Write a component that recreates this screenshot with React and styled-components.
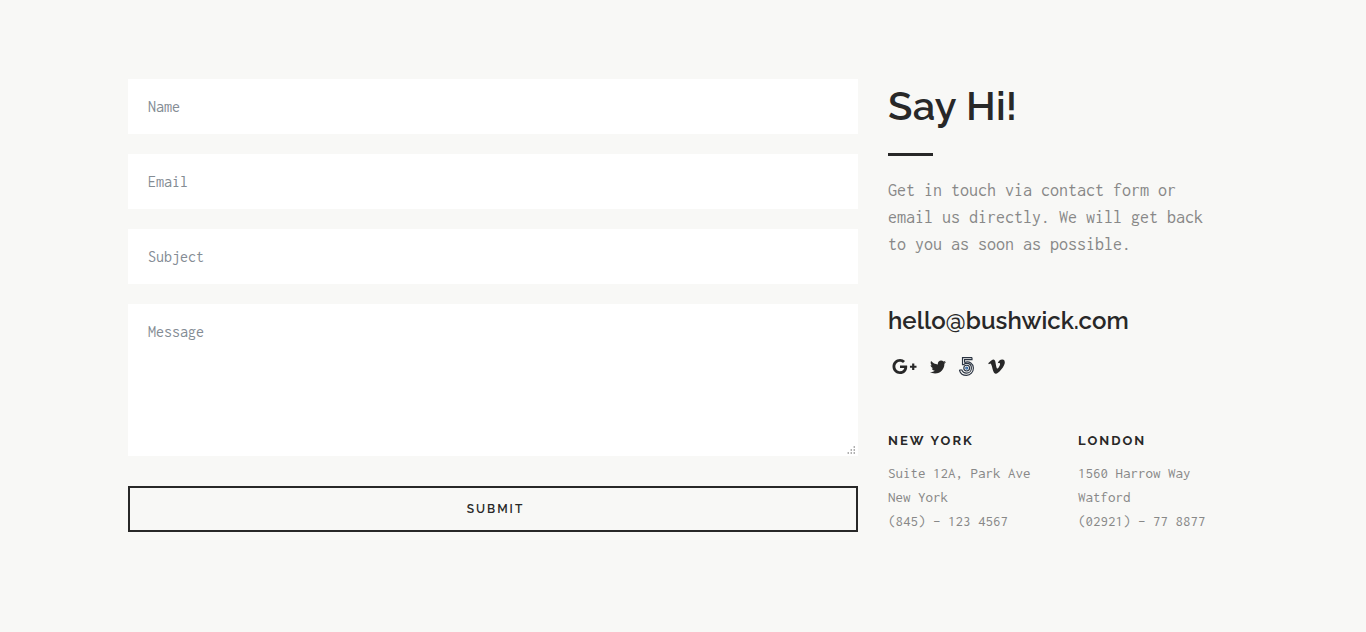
import React from 'react';
import styled, { createGlobalStyle } from 'styled-components';
import { FaTwitter, FaVimeoV, FaGooglePlusG } from 'react-icons/fa';

const GlobalStyle = createGlobalStyle`
  * {
    box-sizing: border-box;
  }
  body {
    margin: 0;
    background: #f8f8f6;
    color: #282828;
    font-family: Raleway, Lato, sans-serif;
  }
`;

const mono = `Inconsolata, 'Liberation Mono', monospace`;

const Section = styled.section`
  display: grid;
  grid-template-columns: 730px 350px;
  column-gap: 30px;
  width: 1110px;
  height: 632px;
  margin: 0 128px;
  padding-top: 79px;
  align-items: start;
`;

const Form = styled.form`
  display: flex;
  flex-direction: column;
  gap: 20px;
`;

const Input = styled.input`
  display: block;
  width: 100%;
  height: 55px;
  padding: 0 20px;
  border: 0;
  border-radius: 0;
  outline: none;
  background: #fff;
  font-family: ${mono};
  font-size: 16px;
  &::placeholder {
    color: #848c94;
    opacity: 1;
  }
`;

const MessageWrapper = styled.div`
  position: relative;
  svg {
    position: absolute;
    right: 3px;
    bottom: 2px;
    pointer-events: none;
  }
`;

const Message = styled(Input)`
  height: 152px;
  padding: 18px 20px;
  line-height: 20px;
  resize: none;
`;

const Submit = styled.button`
  height: 46px;
  margin-top: 10px;
  padding: 0 0 0 5px;
  border: 2px solid #282828;
  background: transparent;
  color: #282828;
  font-family: Raleway, Lato, sans-serif;
  font-size: 12px;
  font-weight: 600;
  letter-spacing: 2px;
`;

const Title = styled.h2`
  margin: 3px 0 0;
  font-size: 40px;
  font-weight: 600;
  line-height: 48px;
  letter-spacing: 0.25px;
  white-space: nowrap;
`;

const Divider = styled.div`
  width: 45px;
  height: 3px;
  margin: 23px 0 21px;
  background: #282828;
`;

const Intro = styled.p`
  margin: 0;
  color: #888;
  font-family: ${mono};
  font-size: 18px;
  line-height: 27px;
  white-space: nowrap;
`;

const Email = styled.h4`
  margin: 47px 0 0;
  font-size: 24px;
  font-weight: 600;
  line-height: 32px;
  letter-spacing: 0.02px;
  white-space: nowrap;
`;

const Social = styled.div`
  display: flex;
  align-items: center;
  height: 21px;
  margin: 19px 0 0 4px;
  svg {
    display: block;
  }
`;

const SocialLink = styled.a`
  width: ${({ $width }) => $width}px;
  color: #282828;
`;

const Offices = styled.div`
  display: grid;
  grid-template-columns: 190px 160px;
  margin-top: 54px;
`;

const City = styled.h6`
  margin: 0 0 10px;
  font-size: 13px;
  font-weight: 700;
  line-height: 20px;
  letter-spacing: 2px;
  word-spacing: 1px;
`;

const Address = styled.p`
  margin: 0;
  color: #888;
  font-family: ${mono};
  font-size: 15px;
  line-height: 24px;
  white-space: nowrap;
`;

const FiveHundred = () => (
  <svg width="16" height="19" viewBox="0 0 16 19" fill="none" stroke="#2b3442" strokeWidth="1.15">
    <path d="M13 .6H3.5v7h1.6M13 .6v2H5.5v3" />
    <path d="M5.5 5.5C10.5 3.6 14.4 6.9 14.4 11c0 4.2-3 7.3-6.9 7.3-3.6 0-6.2-2-7-5l2.2-.5" />
    <path d="M2.7 12.8c.8 2.1 2.4 3.3 4.8 3.3 2.9 0 4.9-2.2 4.9-5.1S10.4 6.4 7.7 6.4c-1.3 0-2.2.4-3 1.2" />
    <circle cx="7.7" cy="11.1" r="2.9" />
    <circle cx="7.7" cy="11.1" r="1" stroke="#2f66a3" />
  </svg>
);

const gripDots = [[6, 0], [3, 3], [6, 3], [0, 6], [3, 6], [6, 6]];

const Grip = () => (
  <svg width="8" height="8" viewBox="0 0 8 8">
    {gripDots.map(([x, y]) => (
      <g key={`${x}-${y}`}>
        <path d={`M${x} ${y}h2v2h-2z`} fill="#dcdcdc" />
        <path d={`M${x + 1} ${y}h1v2h-1z`} fill="#b0b0b0" />
      </g>
    ))}
  </svg>
);

const offices = [
  { city: 'NEW YORK', lines: ['Suite 12A, Park Ave', 'New York', '(845) – 123 4567'] },
  { city: 'LONDON', lines: ['1560 Harrow Way', 'Watford', '(02921) – 77 8877'] },
];

export default function App() {
  return (
    <>
      <GlobalStyle />
      <Section>
        <Form>
          <Input type="text" placeholder="Name" />
          <Input type="email" placeholder="Email" />
          <Input type="text" placeholder="Subject" />
          <MessageWrapper>
            <Message as="textarea" placeholder="Message" />
            <Grip />
          </MessageWrapper>
          <Submit type="button">SUBMIT</Submit>
        </Form>
        <div>
          <Title>Say Hi!</Title>
          <Divider />
          <Intro>
            Get in touch via contact form or
            <br />
            email us directly. We will get back
            <br />
            to you as soon as possible.
          </Intro>
          <Email>hello@bushwick.com</Email>
          <Social>
            <SocialLink $width={38}>
              <FaGooglePlusG size={25} />
            </SocialLink>
            <SocialLink $width={29}>
              <FaTwitter size={16} />
            </SocialLink>
            <SocialLink $width={28}>
              <FiveHundred />
            </SocialLink>
            <SocialLink $width={19}>
              <FaVimeoV size={19} />
            </SocialLink>
          </Social>
          <Offices>
            {offices.map(({ city, lines }) => (
              <div key={city}>
                <City>{city}</City>
                {lines.map((line) => (
                  <Address key={line}>{line}</Address>
                ))}
              </div>
            ))}
          </Offices>
        </div>
      </Section>
    </>
  );
}
